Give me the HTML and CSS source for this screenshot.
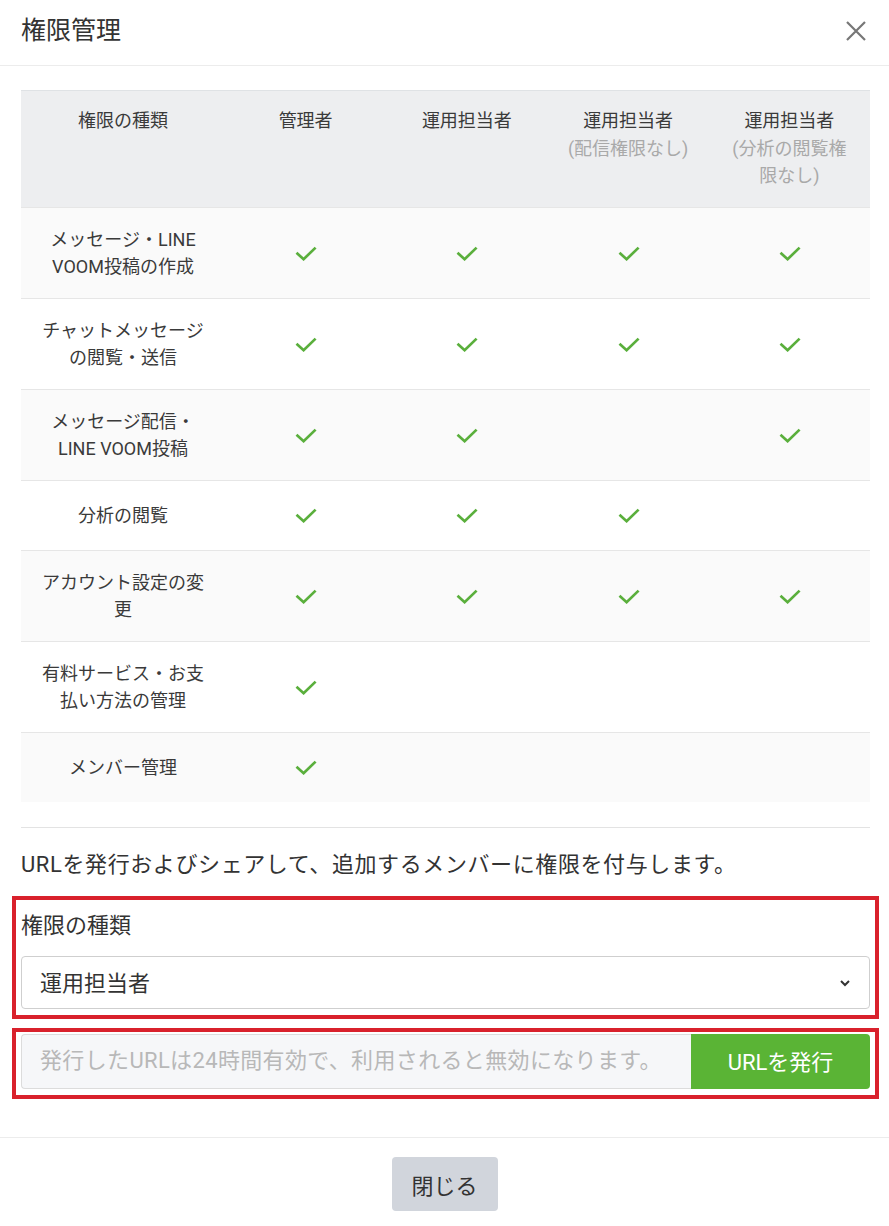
FILE: index.html
```html
<!DOCTYPE html>
<html lang="ja">
<head>
<meta charset="utf-8">
<title>権限管理</title>
<link rel="stylesheet" href="styles.css">
</head>
<body>
<svg width="0" height="0" style="position:absolute">
  <symbol id="chk" viewBox="0 0 22 15"><path d="M1.5 6.8 L8.6 13.2 L20.6 1.6" stroke="#5aaf3c" stroke-width="2.7" fill="none"/></symbol>
</svg>
<div class="modal">
  <header class="modal-header">
    <h1 class="modal-title">権限管理</h1>
    <button class="close-btn" aria-label="閉じる">
      <svg width="20" height="20" viewBox="0 0 20 20"><path d="M1 1 L19 19 M19 1 L1 19" stroke="#777" stroke-width="2.2" fill="none"/></svg>
    </button>
  </header>

  <main class="modal-body">
    <div class="perm-table">
      <div class="perm-row perm-head">
        <div class="cell">権限の種類</div>
        <div class="cell">管理者</div>
        <div class="cell">運用担当者</div>
        <div class="cell">運用担当者<span class="sub">(配信権限なし)</span></div>
        <div class="cell">運用担当者<span class="sub">(分析の閲覧権限なし)</span></div>
      </div>

      <div class="perm-row">
        <div class="cell name">メッセージ・LINE VOOM投稿の作成</div>
        <div class="cell"><svg class="check"><use href="#chk"/></svg></div>
        <div class="cell"><svg class="check"><use href="#chk"/></svg></div>
        <div class="cell"><svg class="check"><use href="#chk"/></svg></div>
        <div class="cell"><svg class="check"><use href="#chk"/></svg></div>
      </div>
      <div class="perm-row">
        <div class="cell name">チャットメッセージの閲覧・送信</div>
        <div class="cell"><svg class="check"><use href="#chk"/></svg></div>
        <div class="cell"><svg class="check"><use href="#chk"/></svg></div>
        <div class="cell"><svg class="check"><use href="#chk"/></svg></div>
        <div class="cell"><svg class="check"><use href="#chk"/></svg></div>
      </div>
      <div class="perm-row">
        <div class="cell name">メッセージ配信・LINE VOOM投稿</div>
        <div class="cell"><svg class="check"><use href="#chk"/></svg></div>
        <div class="cell"><svg class="check"><use href="#chk"/></svg></div>
        <div class="cell"></div>
        <div class="cell"><svg class="check"><use href="#chk"/></svg></div>
      </div>
      <div class="perm-row">
        <div class="cell name">分析の閲覧</div>
        <div class="cell"><svg class="check"><use href="#chk"/></svg></div>
        <div class="cell"><svg class="check"><use href="#chk"/></svg></div>
        <div class="cell"><svg class="check"><use href="#chk"/></svg></div>
        <div class="cell"></div>
      </div>
      <div class="perm-row">
        <div class="cell name">アカウント設定の変更</div>
        <div class="cell"><svg class="check"><use href="#chk"/></svg></div>
        <div class="cell"><svg class="check"><use href="#chk"/></svg></div>
        <div class="cell"><svg class="check"><use href="#chk"/></svg></div>
        <div class="cell"><svg class="check"><use href="#chk"/></svg></div>
      </div>
      <div class="perm-row">
        <div class="cell name">有料サービス・お支払い方法の管理</div>
        <div class="cell"><svg class="check"><use href="#chk"/></svg></div>
        <div class="cell"></div>
        <div class="cell"></div>
        <div class="cell"></div>
      </div>
      <div class="perm-row">
        <div class="cell name">メンバー管理</div>
        <div class="cell"><svg class="check"><use href="#chk"/></svg></div>
        <div class="cell"></div>
        <div class="cell"></div>
        <div class="cell"></div>
      </div>
    </div>

    <hr class="divider">

    <p class="lead">URLを発行およびシェアして、追加するメンバーに権限を付与します。</p>

    <section class="mark-box box-select">
      <div class="field-label">権限の種類</div>
      <div class="select">
        <span>運用担当者</span>
        <svg width="12" height="8" viewBox="0 0 12 8"><path d="M2 2 L6 6 L10 2" stroke="#333" stroke-width="2" fill="none"/></svg>
      </div>
    </section>

    <section class="mark-box box-url">
      <div class="input-group">
        <input class="url-input" type="text" placeholder="発行したURLは24時間有効で、利用されると無効になります。">
        <button class="issue-btn">URLを発行</button>
      </div>
    </section>
  </main>

  <footer class="modal-footer">
    <button class="close-footer">閉じる</button>
  </footer>
</div>
</body>
</html>
```

FILE: styles.css
```css
* { box-sizing: border-box; }

body {
  margin: 0;
  background: #fff;
  color: #333;
  font-family: Roboto, "Noto Sans CJK JP", sans-serif;
}

.modal {
  width: 889px;
}

.modal-header {
  height: 66px;
  border-bottom: 1px solid #ececec;
  padding: 0 21px 3px;
  display: flex;
  align-items: center;
  justify-content: space-between;
}

.modal-title {
  margin: 0;
  font-size: 25px;
  font-weight: 400;
  line-height: 32px;
  color: #333;
}

.close-btn {
  border: 0;
  background: none;
  padding: 0;
  margin-right: 2px;
  display: flex;
}

.modal-body {
  padding: 24px 19px 0 21px;
}

.perm-table {
  font-size: 18px;
  color: #3a3a3a;
}

.perm-row {
  display: grid;
  grid-template-columns: 204px repeat(4, 1fr);
  min-height: 70px;
  border-top: 1px solid #e6e6e6;
}

.perm-row:nth-child(even) { background: #fafafa; }
.perm-row:nth-child(odd) { background: #fff; }

.perm-row .cell {
  padding: 18px 16px;
  line-height: 27px;
  display: flex;
  align-items: center;
  justify-content: center;
  text-align: center;
}

.perm-head {
  background: #edeef0 !important;
  border-top: 1px solid #dfe2e5;
  height: 117px;
}

.perm-head .cell {
  flex-direction: column;
  justify-content: flex-start;
  padding: 16px 16px 0;
  line-height: 27.5px;
}

.perm-head .sub {
  color: #a9a9a9;
}

.check {
  display: block;
  width: 22px;
  height: 15px;
  margin-left: 1px;
}

.divider {
  margin: 25px 0 0;
  border: 0;
  border-top: 1px solid #e3e3e3;
}

.lead {
  margin: 21px 0 0;
  font-size: 22px;
  line-height: 32px;
  letter-spacing: 0.6px;
  color: #333;
}

.mark-box {
  border: 4px solid #d9212c;
  margin: 0 -9px;
  padding: 0 5px;
}

.box-select {
  margin-top: 15px;
  padding-top: 10px;
  padding-bottom: 6px;
}

.field-label {
  font-size: 22px;
  line-height: 32px;
  margin-bottom: 14px;
}

.select {
  height: 53px;
  border: 1px solid #cfcfcf;
  border-radius: 4px;
  padding: 0 18px 0 18px;
  display: flex;
  align-items: center;
  justify-content: space-between;
  font-size: 22px;
  color: #333;
  background: #fff;
}

.select span {
  margin-top: -3px;
}

.box-url {
  margin-top: 9px;
  padding-top: 2px;
  padding-bottom: 6px;
}

.input-group {
  display: flex;
  height: 55px;
}

.url-input {
  flex: 1;
  min-width: 0;
  border: 1px solid #dcdcdc;
  border-right: 0;
  border-radius: 4px 0 0 4px;
  background: #f6f7f9;
  padding: 0 18px 3px;
  font-family: inherit;
  font-size: 22px;
  letter-spacing: 0.35px;
  color: #333;
}
.url-input::placeholder { color: #b8b8b8; }

.issue-btn {
  width: 179px;
  border: 0;
  border-radius: 0 4px 4px 0;
  background: #5ab435;
  color: #fff;
  font-family: inherit;
  font-size: 22px;
  padding: 0 0 3px;
}

.modal-footer {
  margin-top: 38px;
  border-top: 1px solid #ececec;
  padding-top: 19px;
  display: flex;
  justify-content: center;
}

.close-footer {
  width: 106px;
  height: 54px;
  border: 0;
  border-radius: 4px;
  background: #d1d5dc;
  color: #333;
  font-family: inherit;
  font-size: 22px;
}
```
